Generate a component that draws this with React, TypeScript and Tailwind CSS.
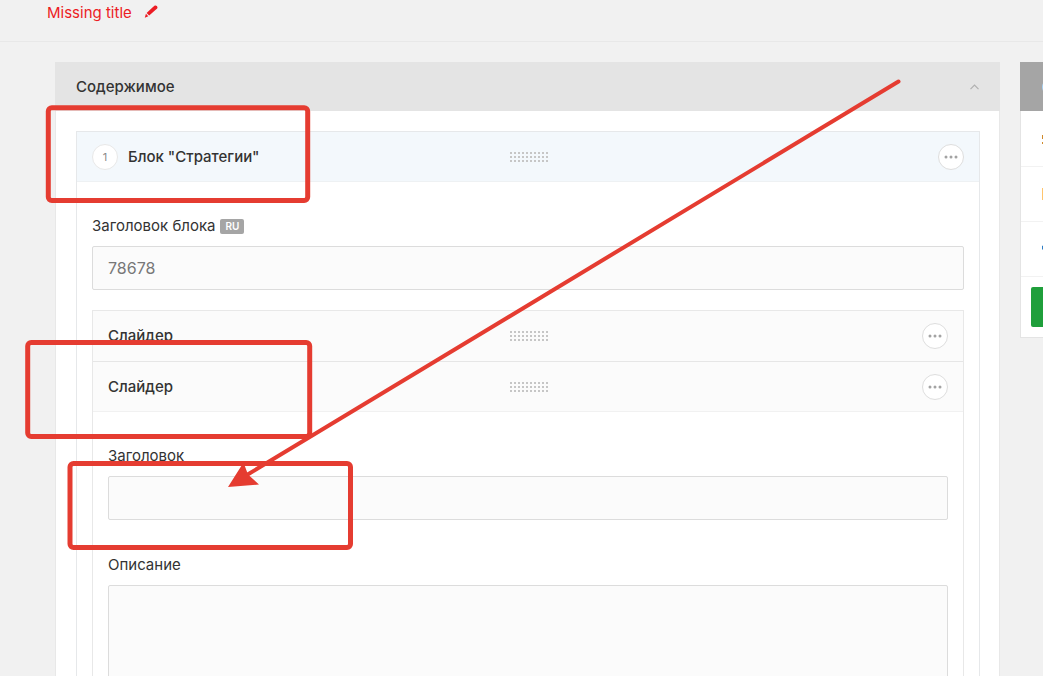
import type { ReactNode } from 'react'

const MARK = '#e53c31'

function DragHandle() {
  const rows = [0, 4, 8]
  const cols = [2, 6, 10, 14, 18, 22, 26, 30, 34, 38]
  return (
    <svg className="shrink-0" width="40" height="10" viewBox="0 0 40 10" fill="#c6c6c6" aria-hidden="true">
      {rows.map((y) => cols.map((x) => <rect key={`${x}-${y}`} x={x} y={y} width="2" height="2" />))}
    </svg>
  )
}

function MoreButton() {
  return (
    <button type="button" aria-label="…" className="flex h-[26px] w-[26px] items-center justify-center rounded-full border border-[#dedede] bg-white">
      <svg width="14" height="4" viewBox="0 0 14 4" fill="#a3a3a3">
        <circle cx="2" cy="2" r="1.5" />
        <circle cx="7" cy="2" r="1.5" />
        <circle cx="12" cy="2" r="1.5" />
      </svg>
    </button>
  )
}

function BlockHeader({ children, className }: { children: ReactNode; className: string }) {
  return (
    <div className={`grid grid-cols-[1fr_auto_1fr] items-center border-b px-[15px] ${className}`}>
      <div className="flex items-center gap-[10px] font-medium">{children}</div>
      <DragHandle />
      <div className="flex justify-end">
        <MoreButton />
      </div>
    </div>
  )
}

function Annotations() {
  return (
    <svg className="pointer-events-none absolute top-0 left-0" width="1043" height="676" viewBox="0 0 1043 676" fill="none" stroke={MARK} strokeWidth="5" aria-hidden="true">
      <rect x="48.3" y="107.8" width="259.4" height="92.6" rx="3.5" />
      <rect x="27.7" y="342.5" width="282" height="94" rx="3.5" />
      <rect x="70" y="463.5" width="280.5" height="84" rx="3.5" />
      <path d="M898.5 81.5L246 475.5" strokeWidth="4" strokeLinecap="round" />
      <path d="M228 487L243.5 462.5L248 474.5L259 484.5Z" fill={MARK} stroke="none" />
    </svg>
  )
}

function Sidebar() {
  return (
    <aside className="-mr-64 w-[279px] shrink-0 border border-[#e4e4e4] bg-white">
      <div className="-mx-px -mt-px flex h-[49px] items-center bg-[#a5a5a5] pl-[22px]">
        <svg width="14" height="14" viewBox="0 0 14 14" fill="#a9d3f5">
          <circle cx="7" cy="7" r="7" />
        </svg>
      </div>
      <div className="flex h-14 items-center border-b border-[#f2f2f2] pl-[21px]">
        <svg width="14" height="14" viewBox="0 0 14 14" fill="#d08a2c">
          <path d="M0 3h14v4H0zM0 10h14v2H0z" />
        </svg>
      </div>
      <div className="flex h-[55px] items-center border-b border-[#f2f2f2] pl-[21px]">
        <svg width="14" height="12" viewBox="0 0 14 12" fill="#ffc56e">
          <path d="M0 0h14v12H0z" />
        </svg>
      </div>
      <div className="flex h-[55px] items-center border-b border-[#f2f2f2] pl-[21px]">
        <svg width="14" height="14" viewBox="0 0 14 14" fill="#2f7ec4">
          <path d="M0 4L7 0L14 5V9L7 14L0 7Z" />
        </svg>
      </div>
      <div className="p-[10px]">
        <button type="button" aria-label="✓" className="block h-10 w-full rounded-xs bg-[#1f9f3b]" />
      </div>
    </aside>
  )
}

const field = 'block w-full rounded-xs border border-[#dcdcdc] bg-[#fbfbfb] px-[15px] text-base text-[#777] outline-none'

export default function App() {
  return (
    <div className="relative h-screen overflow-hidden bg-[#f1f1f1] font-['Inter',sans-serif] text-[15px] leading-5 text-[#333]">
      <header className="flex h-[42px] items-start gap-3 border-b border-[#e8e8e8] pt-[3px] pl-[47px] text-[#ec1c24]">
        <h1>Missing title</h1>
        <svg className="mt-[2px]" width="14" height="14" viewBox="0 0 14 14" fill="#ec1c24" aria-hidden="true">
          <path d="M9 2.1L10.8 0.6Q11.8 0 12.9 1.1Q14 2.3 13.2 3.4L11.4 5L5.2 10.6L2.6 8ZM1.9 8.8L4.3 11.2L0.8 12.7Z" />
        </svg>
      </header>

      <div className="flex items-start gap-5 pt-5 pl-[55px]">
        <main className="min-w-0 flex-1 border border-[#e8e8e8] bg-white">
          <div className="-mx-px -mt-px flex h-[49px] items-center justify-between bg-[#e4e4e4] px-[21px]">
            <h2 className="font-medium">Содержимое</h2>
            <svg width="10" height="6" viewBox="0 0 10 6" fill="none" stroke="#b0b0b0" strokeWidth="1.2" aria-hidden="true">
              <path d="M1.5 5.2L5.5 1.2L9.5 5.2" />
            </svg>
          </div>

          <section className="my-5 mr-[19px] ml-5 border border-[#e6e8ea]">
            <BlockHeader className="h-[50px] border-[#eef1f3] bg-[#f3f8fc]">
              <span className="flex h-[26px] w-[26px] items-center justify-center rounded-full border border-[#e8e8e8] bg-white text-[11px] font-normal text-[#888]">1</span>
              <h3>Блок "Стратегии"</h3>
            </BlockHeader>

            <div className="px-[15px] pt-[34px]">
              <div className="mb-[10px] flex items-center gap-[5px]">
                <label htmlFor="block-title">Заголовок блока</label>
                <span className="rounded-xs bg-[#a5a5a5] px-[5px] text-[10px] leading-[15px] font-semibold text-white">RU</span>
              </div>
              <input id="block-title" type="text" defaultValue="78678" className={`${field} h-11`} />

              <div className="mt-5 border border-[#e8e8e8]">
                <BlockHeader className="h-[51px] border-[#e6e6e6] bg-[#fbfbfb]">
                  <h4>Слайдер</h4>
                </BlockHeader>
                <BlockHeader className="h-[50px] border-[#f1f1f1] bg-[#fbfbfb]">
                  <h4>Слайдер</h4>
                </BlockHeader>
                <div className="px-[15px] pt-[34px] pb-5">
                  <label htmlFor="slide-title" className="mb-[10px] block">Заголовок</label>
                  <input id="slide-title" type="text" className={`${field} mb-[35px] h-11`} />
                  <label htmlFor="slide-text" className="mb-[10px] block">Описание</label>
                  <textarea id="slide-text" className={`${field} h-40 resize-none py-3`} />
                </div>
              </div>
            </div>
          </section>
        </main>

        <Sidebar />
      </div>

      <Annotations />
    </div>
  )
}
